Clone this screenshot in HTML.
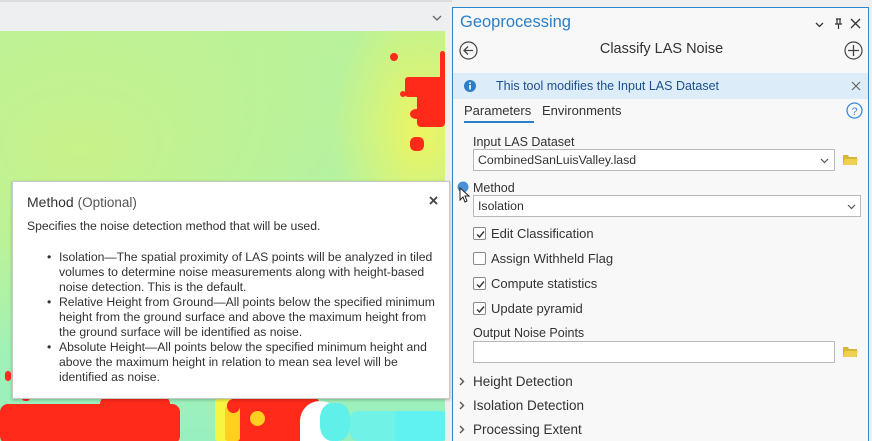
<!DOCTYPE html>
<html><head><meta charset="utf-8">
<style>
*{box-sizing:border-box;margin:0;padding:0}
body{width:872px;height:441px;overflow:hidden;background:#eeeff0;font-family:"Liberation Sans",sans-serif;position:relative;color:#323232}
.top{position:absolute;left:0;top:0;width:452px;height:30px;background:#eeeff0;border-top:2px solid #dcdcdc}
.map{position:absolute;left:0;top:31px;width:445px;height:410px;overflow:hidden;
background:
radial-gradient(ellipse 90px 140px at 420px 100px,#eef560 0%,rgba(238,245,96,0) 100%),
radial-gradient(ellipse 300px 200px at 80px 120px,#c8f28a 0%,rgba(200,242,138,0) 100%),
linear-gradient(180deg,#b9f29a 0%,#aef2a8 50%,#98f0c0 100%)}
.map div{position:absolute;background:#ff2a1a;border-radius:3px}
.panel{position:absolute;left:452px;top:7px;width:417px;height:434px;background:#f8f8f8;border:1px solid #2b86d0;border-bottom:none}
.abs{position:absolute}
.t{font-size:13px;color:#323232;white-space:nowrap}
.box{position:absolute;background:#fff;border:1px solid #b9b9b9;height:22px}
.cb{position:absolute;width:13px;height:13px;border:1px solid #8a8a8a;border-radius:2px;background:#fff}
.cb svg{position:absolute;left:1px;top:1px}
.tip{position:absolute;left:12px;top:181px;width:438px;height:218px;background:#fff;border:1px solid #c8c8c8;box-shadow:0 1px 3px rgba(0,0,0,.25)}
.tip ul{position:absolute;left:46px;top:68px;width:385px;font-size:12.2px;line-height:15px;color:#323232;list-style:none}
.tip li{position:relative}
.tip li:before{content:"•";position:absolute;left:-12px}
</style></head><body>
<div class="top"><svg class="abs" style="left:432px;top:13px" width="10" height="7"><path d="M1 1l4 4 4-4" stroke="#666" fill="none" stroke-width="1.3"/></svg></div>
<div class="map">
<div style="left:417px;top:46px;width:28px;height:50px;border-radius:4px"></div>
<div style="left:405px;top:46px;width:20px;height:20px"></div>
<div style="left:410px;top:78px;width:12px;height:10px;border-radius:50%"></div>
<div style="left:410px;top:106px;width:14px;height:14px;border-radius:40%"></div>
<div style="left:390px;top:22px;width:8px;height:8px;border-radius:50%"></div>
<div style="left:400px;top:60px;width:6px;height:6px;border-radius:50%"></div>
<div style="left:440px;top:20px;width:5px;height:50px"></div>
<div style="left:0;top:373px;width:180px;height:40px;border-radius:8px"></div>
<div style="left:100px;top:365px;width:70px;height:20px;border-radius:8px"></div>
<div style="left:215px;top:368px;width:30px;height:42px;background:#f6f640"></div>
<div style="left:230px;top:366px;width:90px;height:45px;border-radius:8px"></div>
<div style="left:300px;top:370px;width:40px;height:40px;background:#ffffff;border-radius:50% 50% 0 0"></div>
<div style="left:320px;top:372px;width:30px;height:38px;background:#5ff0ea;border-radius:40%"></div>
<div style="left:225px;top:375px;width:15px;height:35px;background:#ffd020"></div>
<div style="left:227px;top:368px;width:13px;height:14px;border-radius:50%"></div>
<div style="left:350px;top:380px;width:95px;height:30px;background:#70f2e6;border-radius:8px"></div>
<div style="left:250px;top:380px;width:15px;height:15px;background:#ffd020;border-radius:50%"></div>
<div style="left:395px;top:380px;width:50px;height:30px;background:#60f2f0"></div>
<div style="left:5px;top:340px;width:6px;height:10px"></div>
<div style="left:22px;top:362px;width:8px;height:8px"></div>
</div>
<div class="panel">
<div class="abs" style="left:7px;top:5px;font-size:16.5px;color:#2b7fc8">Geoprocessing</div>
<svg class="abs" style="left:362px;top:14px" width="9" height="6"><path d="M1 1l3.5 3.5L8 1" stroke="#333" fill="none" stroke-width="1.3"/></svg>
<svg class="abs" style="left:381px;top:10px" width="9" height="12"><path d="M2 1h5M3 1v5M6 1v5M1 6h7M4.5 6v5" stroke="#333" fill="none" stroke-width="1.2"/></svg>
<svg class="abs" style="left:397px;top:10px" width="11" height="11"><path d="M1 1l9 9M10 1l-9 9" stroke="#333" stroke-width="1.3"/></svg>
<svg class="abs" style="left:6px;top:33px" width="19" height="19"><circle cx="9.5" cy="9.5" r="8.5" fill="none" stroke="#444" stroke-width="1.2"/><path d="M14 9.5H5M9 5.5l-4 4 4 4" stroke="#444" fill="none" stroke-width="1.3"/></svg>
<div class="abs" style="left:0;width:417px;top:33px;text-align:center;font-size:14.5px;color:#333">Classify LAS Noise</div>
<svg class="abs" style="left:391px;top:33px" width="19" height="19"><circle cx="9.5" cy="9.5" r="8.5" fill="none" stroke="#444" stroke-width="1.2"/><path d="M9.5 4v11M4 9.5h11" stroke="#444" stroke-width="1.3"/></svg>
<div class="abs" style="left:0;top:65px;width:415px;height:26px;background:#dcecf8"></div>
<svg class="abs" style="left:11px;top:72px" width="12" height="12"><circle cx="6" cy="6" r="6" fill="#2b7fc8"/><rect x="5.2" y="5" width="1.6" height="4.5" fill="#fff"/><rect x="5.2" y="2.4" width="1.6" height="1.6" fill="#fff"/></svg>
<div class="abs t" style="left:43px;top:71px;font-size:12.5px;color:#1d4f8f">This tool modifies the Input LAS Dataset</div>
<svg class="abs" style="left:398px;top:73px" width="10" height="10"><path d="M1 1l8 8M9 1l-8 8" stroke="#666" stroke-width="1.2"/></svg>
<div class="abs t" style="left:11px;top:95px;font-size:13px">Parameters</div>
<div class="abs" style="left:11px;top:113px;width:70px;height:2px;background:#2b7fc8"></div>
<div class="abs t" style="left:89px;top:95px;font-size:13px">Environments</div>
<svg class="abs" style="left:393px;top:94px" width="17" height="17"><circle cx="8.5" cy="8.5" r="7.5" fill="none" stroke="#3a8ad6" stroke-width="1.3"/><text x="8.5" y="13" font-size="11" text-anchor="middle" fill="#3a8ad6" font-family="Liberation Sans">?</text></svg>
<div class="abs t" style="left:20px;top:127px;font-size:12.5px">Input LAS Dataset</div>
<div class="box" style="left:20px;top:141px;width:362px"><span class="t" style="position:absolute;left:4px;top:3px;font-size:12.3px">CombinedSanLuisValley.lasd</span><svg class="abs" style="left:346px;top:8px" width="9" height="6"><path d="M1 1l3.5 3.5L8 1" stroke="#555" fill="none" stroke-width="1.2"/></svg></div>
<svg class="abs" style="left:389px;top:145px" width="17" height="13"><path d="M1 2h5l1 2h8v8H1z" fill="#d8b830"/><path d="M3 6h13l-2 6H1z" fill="#f0d050"/></svg>
<div class="abs t" style="left:20px;top:173px;font-size:12.5px">Method</div>
<div class="box" style="left:20px;top:187px;width:388px"><span class="t" style="position:absolute;left:4px;top:3px;font-size:12.3px">Isolation</span><svg class="abs" style="left:373px;top:8px" width="9" height="6"><path d="M1 1l3.5 3.5L8 1" stroke="#555" fill="none" stroke-width="1.2"/></svg></div>
<div class="cb" style="left:20px;top:219px"><svg width="11" height="11"><path d="M2 5.5l2.5 2.5L9 2.5" stroke="#333" fill="none" stroke-width="1.4"/></svg></div>
<div class="abs t" style="left:38px;top:218px">Edit Classification</div>
<div class="cb" style="left:20px;top:244px"></div>
<div class="abs t" style="left:38px;top:243px">Assign Withheld Flag</div>
<div class="cb" style="left:20px;top:269px"><svg width="11" height="11"><path d="M2 5.5l2.5 2.5L9 2.5" stroke="#333" fill="none" stroke-width="1.4"/></svg></div>
<div class="abs t" style="left:38px;top:268px">Compute statistics</div>
<div class="cb" style="left:20px;top:294px"><svg width="11" height="11"><path d="M2 5.5l2.5 2.5L9 2.5" stroke="#333" fill="none" stroke-width="1.4"/></svg></div>
<div class="abs t" style="left:38px;top:293px">Update pyramid</div>
<div class="abs t" style="left:20px;top:318px;font-size:12.5px">Output Noise Points</div>
<div class="box" style="left:20px;top:333px;width:362px"></div>
<svg class="abs" style="left:389px;top:337px" width="17" height="13"><path d="M1 2h5l1 2h8v8H1z" fill="#d8b830"/><path d="M3 6h13l-2 6H1z" fill="#f0d050"/></svg>
<svg class="abs" style="left:6px;top:369px" width="6" height="9"><path d="M1 1l3.5 3.5L1 8" stroke="#555" fill="none" stroke-width="1.4"/></svg>
<div class="abs t" style="left:20px;top:366px;font-size:13.5px">Height Detection</div>
<svg class="abs" style="left:6px;top:393px" width="6" height="9"><path d="M1 1l3.5 3.5L1 8" stroke="#555" fill="none" stroke-width="1.4"/></svg>
<div class="abs t" style="left:20px;top:390px;font-size:13.5px">Isolation Detection</div>
<svg class="abs" style="left:6px;top:417px" width="6" height="9"><path d="M1 1l3.5 3.5L1 8" stroke="#555" fill="none" stroke-width="1.4"/></svg>
<div class="abs t" style="left:20px;top:414px;font-size:13.5px">Processing Extent</div>
</div>
<div class="tip">
<div class="abs t" style="left:14px;top:12px;font-size:14px;color:#333">Method <span style="color:#555;font-size:13.5px">(Optional)</span></div>
<svg class="abs" style="left:416px;top:14px" width="9" height="9"><path d="M1 1l7 7M8 1l-7 7" stroke="#444" stroke-width="1.8"/></svg>
<div class="abs t" style="left:14px;top:37px;font-size:12.2px">Specifies the noise detection method that will be used.</div>
<ul>
<li>Isolation—The spatial proximity of LAS points will be analyzed in tiled volumes to determine noise measurements along with height-based noise detection. This is the default.</li>
<li>Relative Height from Ground—All points below the specified minimum height from the ground surface and above the maximum height from the ground surface will be identified as noise.</li>
<li>Absolute Height—All points below the specified minimum height and above the maximum height in relation to mean sea level will be identified as noise.</li>
</ul>
</div>
<svg class="abs" style="left:457px;top:181px" width="16" height="24"><circle cx="6" cy="6" r="5.5" fill="#4a90d6"/><path d="M3 7v12l3-3 2 5 2-1-2-5h4z" fill="#fff" stroke="#222" stroke-width="1"/></svg>
</body></html>
